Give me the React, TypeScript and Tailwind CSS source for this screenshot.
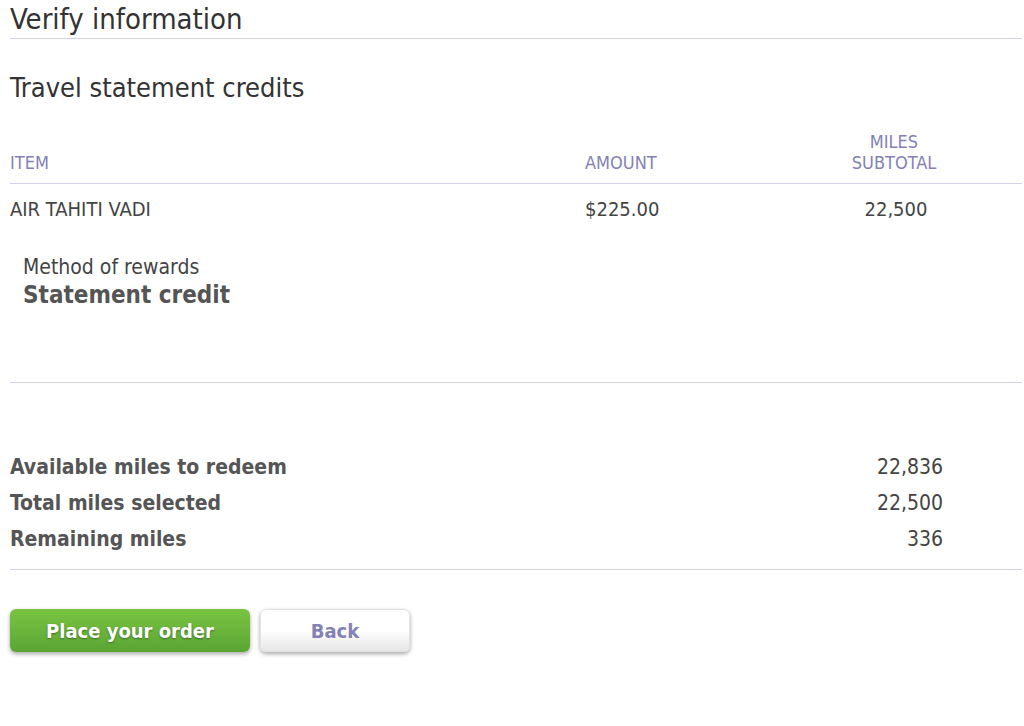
export default function App() {
  const font = { fontFamily: '"DejaVu Sans Condensed", Tahoma, "DejaVu Sans", sans-serif' };
  return (
    <div className="min-h-[726px] bg-white pl-[10px] pr-[2px] text-[#444]" style={font}>
      <h1 className="border-b border-[#d3d1e8] pb-[2px] pt-[2px] text-[29px] leading-[34px] text-[#333]">
        Verify information
      </h1>

      <h2 className="mt-[33px] text-[27px] leading-[32px] text-[#333]">Travel statement credits</h2>

      <div className="mt-[27px] flex items-end border-b border-[#d3d1e8] pb-[10px] text-[18px] leading-[21px] text-[#8481b4]">
        <div className="w-[575px]">ITEM</div>
        <div className="w-[219px]">AMOUNT</div>
        <div className="w-[180px] text-center">
          MILES
          <br />
          SUBTOTAL
        </div>
      </div>

      <div className="flex pt-[13px] text-[20px] leading-[24px]">
        <div className="w-[575px]">AIR TAHITI VADI</div>
        <div className="w-[219px]">$225.00</div>
        <div className="w-[180px] pl-[4px] text-center">22,500</div>
      </div>

      <div className="ml-[13px] mt-[34px] h-[127px]">
        <div className="text-[21px] leading-[24px]">Method of rewards</div>
        <div className="mt-[1px] text-[24px] font-bold leading-[30px] text-[#555]">Statement credit</div>
      </div>

      <div className="border-b border-[#d3d1e8]" />

      <div className="mt-[66px] border-b border-[#d3d1e8] pb-[12px] text-[21px] font-bold leading-[36px] text-[#555]">
        {[
          ["Available miles to redeem", "22,836"],
          ["Total miles selected", "22,500"],
          ["Remaining miles", "336"],
        ].map(([label, value]) => (
          <div key={label} className="flex w-[933px] justify-between">
            <span>{label}</span>
            <span className="font-normal text-[#444]">{value}</span>
          </div>
        ))}
      </div>

      <div className="mt-[39px] flex gap-[10px]">
        <button className="h-[43px] w-[240px] rounded-[6px] bg-gradient-to-b from-[#7ac443] to-[#5aa533] text-[20px] font-bold text-white shadow-[0_2px_4px_rgba(0,0,0,0.35)] [text-shadow:0_1px_2px_rgba(0,0,0,0.4)]">
          Place your order
        </button>
        <button className="h-[43px] w-[150px] rounded-[6px] border border-[#e2e2e2] bg-gradient-to-b from-white via-white to-[#e6e6e6] text-[20px] font-bold text-[#8481b4] shadow-[0_2px_4px_rgba(0,0,0,0.35)]">
          Back
        </button>
      </div>
    </div>
  );
}
